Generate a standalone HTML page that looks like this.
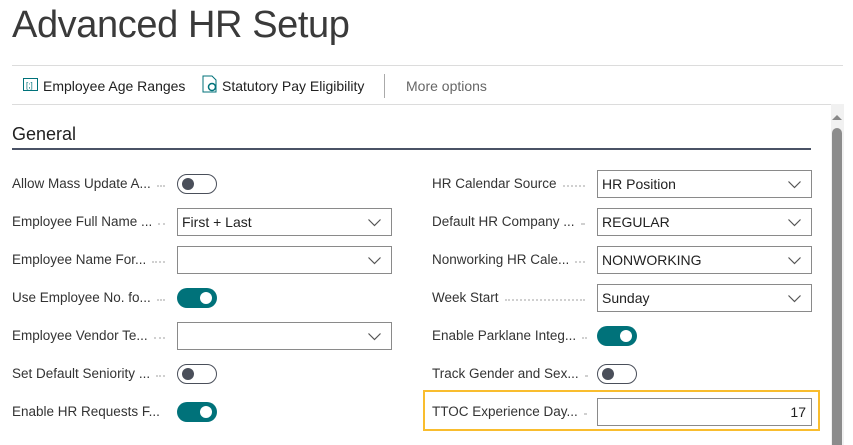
<!DOCTYPE html><html><head><style>
*{box-sizing:border-box;margin:0;padding:0}
body{width:853px;height:445px;overflow:hidden;background:#fff;font-family:"Liberation Sans",sans-serif;color:#212121;position:relative}
.a{position:absolute}
.t{left:12px;top:4px;font-size:38px;font-weight:300;color:#3a3a3a;letter-spacing:-0.4px}
.lbl{font-size:13.5px;color:#333;white-space:nowrap}
.lw{display:flex;align-items:center}
.dots{flex:1;border-bottom:2px dotted #d0d0d0;height:1px;margin:4px 0 0 6px}
.fld{border:1px solid #8a8a8a;height:28px;font-size:14px;padding:5px 4px;color:#212121}
.chev{position:absolute;right:10px;top:10px}
.tg{width:40px;height:20px;border-radius:10px}
.off{border:1.5px solid #4a4f5a;background:#fff}
.off::after{content:"";position:absolute;left:4px;top:3px;width:12px;height:12px;border-radius:50%;background:#4a4f5a}
.on{background:#00727a}
.on::after{content:"";position:absolute;right:5px;top:4px;width:12px;height:12px;border-radius:50%;background:#fff}
</style></head><body>
<div class="a t">Advanced HR Setup</div>
<div class="a" style="left:12px;top:65px;width:831px;height:1px;background:#dcdcdc"></div>
<div class="a" style="left:12px;top:104px;width:819px;height:1px;background:#dcdcdc"></div>
<svg class="a" style="left:23px;top:78px" width="15" height="13"><rect x="0.5" y="0.5" width="14" height="12" fill="none" stroke="#00727a"/><text x="3" y="10" font-size="8" fill="#00727a" font-family="Liberation Sans">[;]</text></svg>
<div class="a lbl" style="left:43px;top:78px;font-size:14px;color:#212121">Employee Age Ranges</div>
<svg class="a" style="left:202px;top:75px" width="17" height="18"><path d="M1 1h9l4 4v12H1z" fill="none" stroke="#00727a"/><circle cx="10" cy="12" r="3.5" fill="none" stroke="#00727a" stroke-width="1.5"/></svg>
<div class="a lbl" style="left:222px;top:78px;font-size:14px;color:#212121">Statutory Pay Eligibility</div>
<div class="a" style="left:384px;top:74px;width:1px;height:24px;background:#aaa"></div>
<div class="a lbl" style="left:406px;top:78px;font-size:14px;color:#666">More options</div>
<div class="a" style="left:12px;top:124px;font-size:18px;color:#212121">General</div>
<div class="a" style="left:12px;top:148px;width:799px;height:2px;background:#4a5265"></div>
<div class="a" style="left:831px;top:104px;width:13px;height:341px;background:#f1f1f1"></div>
<div class="a" style="left:832px;top:128px;width:10px;height:317px;background:#8c8c8c;border-radius:5px 5px 0 0"></div>
<svg class="a" style="left:832px;top:114px" width="10" height="6"><path d="M0 6L5 1L10 6z" fill="#888"/></svg>
<div id="rows"></div>
<div class="a" style="left:423px;top:390px;width:397px;height:41px;border:2px solid #f9bd2e"></div>
<script>
var L=[["Allow Mass Update A...","off"],["Employee Full Name ...","dd","First + Last"],["Employee Name For...","dd",""],["Use Employee No. fo...","on"],["Employee Vendor Te...","dd",""],["Set Default Seniority ...","off"],["Enable HR Requests F...","on"]];
var R=[["HR Calendar Source","dd","HR Position"],["Default HR Company ...","dd","REGULAR"],["Nonworking HR Cale...","dd","NONWORKING"],["Week Start","dd","Sunday"],["Enable Parklane Integ...","on"],["Track Gender and Sex...","off"],["TTOC Experience Day...","num","17"]];
var h="";
function row(d,lx,fx,y){
 h+='<div class="a lbl lw" style="left:'+lx+'px;top:'+(y-8)+'px;width:'+(fx-lx-12)+'px"><span>'+d[0]+'</span><span class="dots"></span></div>';
 if(d[1]=="dd"||d[1]=="num"){h+='<div class="a fld" style="left:'+fx+'px;top:'+(y-14)+'px;width:215px;'+(d[1]=="num"?'text-align:right;padding-right:5px':'')+'">'+d[2]+(d[1]=="dd"?'<svg class="chev" width="13" height="8"><path d="M0.5 0.5L6.5 6.5L12.5 0.5" fill="none" stroke="#555" stroke-width="1.2"/></svg>':'')+'</div>';}
 else h+='<div class="a tg '+d[1]+'" style="left:'+fx+'px;top:'+(y-10)+'px"></div>';
}
for(var i=0;i<7;i++){var y=184+i*38;row(L[i],12,177,y);row(R[i],432,597,y);}
document.getElementById("rows").innerHTML=h;
</script>
</body></html>
